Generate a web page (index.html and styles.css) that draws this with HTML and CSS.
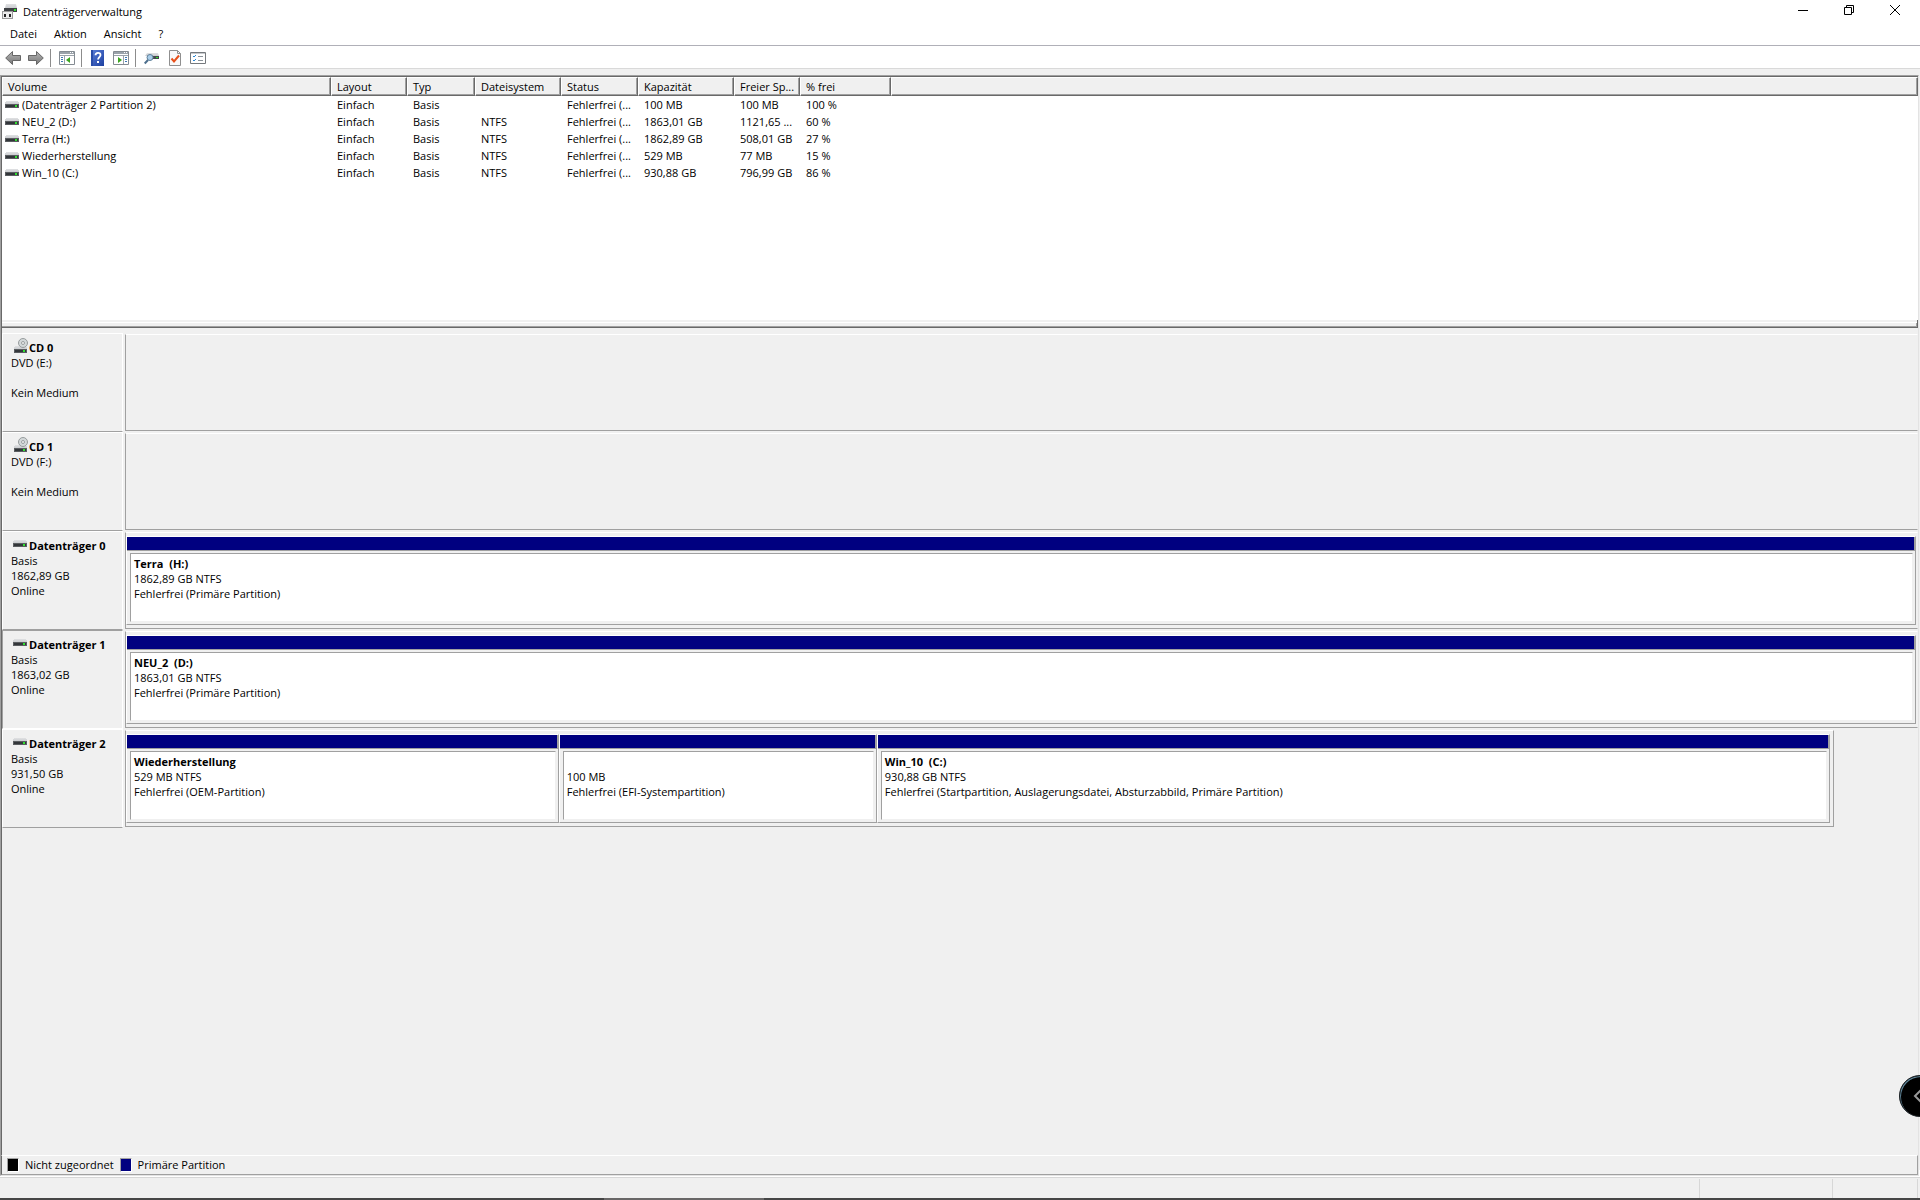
FILE: index.html
```html
<!DOCTYPE html>
<html lang="de">
<head>
  <meta charset="UTF-8">
  <meta name="viewport" content="width=device-width, initial-scale=1.0">
  <title>Datenträgerverwaltung</title>
  <link rel="stylesheet" href="styles.css">
</head>
<body>
  <!-- shared icons -->
  <svg class="sprite" aria-hidden="true">
    <defs>
      <linearGradient id="top" x1="0" y1="0" x2="0" y2="1">
        <stop offset="0" stop-color="#e0e1e3"/>
        <stop offset="1" stop-color="#cbcdd0"/>
      </linearGradient>
      <linearGradient id="arrow" x1="0" y1="0" x2="0" y2="1">
        <stop offset="0" stop-color="#b5b5b5"/>
        <stop offset="1" stop-color="#777"/>
      </linearGradient>
      <linearGradient id="help" x1="0" y1="0" x2="1" y2="1">
        <stop offset="0" stop-color="#5b7fd8"/>
        <stop offset="1" stop-color="#1c3fa0"/>
      </linearGradient>
      <symbol id="drive" viewBox="0 0 14 8">
        <path d="M1 0h12v1h1v2H0V1h1z" fill="url(#top)"/>
        <path d="M0 3h14v4H0z" fill="#5a5d60"/>
        <path d="M1 4h12v2H1z" fill="#33363a"/>
        <path d="M10 4h2v2h-2z" fill="#2fe12f"/>
      </symbol>
      <symbol id="cd" viewBox="0 0 15 16">
        <path d="M2 8h11v1h1v2H1V9h1z" fill="url(#top)"/>
        <circle cx="10" cy="5" r="4.5" fill="#d3d8d9" stroke="#979c9d"/>
        <circle cx="10" cy="5" r="1.5" fill="#f4f4f4" stroke="#9a9fa0"/>
        <path d="M1 11h13v4H1z" fill="#5a5d60"/>
        <path d="M2 12h11v2H2z" fill="#33363a"/>
        <path d="M10 12h2v2h-2z" fill="#2fe12f"/>
      </symbol>
    </defs>
  </svg>

  <div class="window">
    <header class="titlebar">
      <svg class="app-icon" width="16" height="16" viewBox="0 0 16 16">
        <path d="M4 0h10l1 4H3z" fill="url(#top)"/>
        <path d="M2 4h13v4H2z" fill="#3e4144"/>
        <path d="M12 5h2v2h-2z" fill="#2fe12f"/>
        <path d="M0 7h11v8H0z" fill="#9a9a9a"/>
        <path d="M1 8h9v6H1z" fill="#ececec"/>
        <path d="M2 10h2v3H2zM7 10h2v3H7z" fill="#222"/>
      </svg>
      <h1>Datenträgerverwaltung</h1>
      <div class="window-buttons">
        <button type="button" aria-label="Minimieren"><svg width="10" height="10" viewBox="0 0 10 10"><path d="M0 5h10v1H0z"/></svg></button>
        <button type="button" aria-label="Verkleinern"><svg width="10" height="10" viewBox="0 0 10 10"><path d="M.5 2.5h7v7h-7zM2.5 2.5v-2h7v7h-2" fill="none" stroke="#000"/></svg></button>
        <button type="button" aria-label="Schließen"><svg width="10" height="10" viewBox="0 0 10 10"><path d="M0 0l10 10M10 0L0 10" fill="none" stroke="#000"/></svg></button>
      </div>
    </header>

    <nav class="menubar">
      <button type="button">Datei</button>
      <button type="button">Aktion</button>
      <button type="button">Ansicht</button>
      <button type="button">?</button>
    </nav>

    <div class="toolbar">
      <button type="button" aria-label="Zurück"><svg width="16" height="16" viewBox="0 0 16 16"><path d="M.7 8L7.500 1.500v4h8v5h-8v4z" fill="url(#arrow)" stroke="#666"/></svg></button>
      <button type="button" aria-label="Vorwärts"><svg width="16" height="16" viewBox="0 0 16 16"><path d="M15.300 8L8.500 1.500v4h-8v5h8v4z" fill="url(#arrow)" stroke="#666"/></svg></button>
      <span class="divider"></span>
      <button type="button" aria-label="Konsolenstruktur"><svg width="16" height="14" viewBox="0 0 16 14">
        <path d="M.5.5h15v13H.5z" fill="#fff" stroke="#848b92"/><path d="M1 1h14v2H1z" fill="#9aa2aa"/><path d="M11 1h1v1h-1zM13 1h1v1h-1z" fill="#fff"/><path d="M1 4h14v1H1zM5 5h1v8H5z" fill="#9aa2aa"/><path d="M2 6h2v1H2zM2 8h2v1H2zM2 10h2v1H2z" fill="#3d78b4"/><path d="M11 6v6L7 9z" fill="#3aa51f"/></svg></button>
      <span class="divider"></span>
      <button type="button" aria-label="Hilfe"><svg width="13" height="16" viewBox="0 0 13 16">
        <path d="M0 0h13v16H0z" fill="url(#help)"/><path d="M0 0h2v16H0z" fill="#2a4da8"/><path d="M4.500 5.300c0-3.300 5-3.300 5-.3 0 2-2.400 2.200-2.400 4.500" fill="none" stroke="#fff" stroke-width="1.800"/><path d="M6 11h2v2H6z" fill="#fff"/></svg></button>
      <button type="button" aria-label="Aktionsbereich"><svg width="16" height="14" viewBox="0 0 16 14">
        <path d="M.5.5h15v13H.5z" fill="#fff" stroke="#848b92"/><path d="M1 1h14v2H1z" fill="#9aa2aa"/><path d="M11 1h1v1h-1zM13 1h1v1h-1z" fill="#fff"/><path d="M1 4h14v1H1zM10 5h1v8h-1z" fill="#9aa2aa"/><path d="M12 6h2v1h-2zM12 8h2v1h-2zM12 10h2v1h-2z" fill="#3d78b4"/><path d="M5 6v6l4-3z" fill="#3aa51f"/></svg></button>
      <span class="divider"></span>
      <button type="button" aria-label="Aktualisieren"><svg width="15" height="14" viewBox="0 0 15 14">
        <path d="M3 2h11l1 3H1z" fill="url(#top)"/><path d="M3 5h12v3H3z" fill="#45494c"/><path d="M12 6h2v1h-2z" fill="#2fe12f"/><circle cx="6" cy="6.500" r="3" fill="#a9cdea" stroke="#5f8099"/><path d="M4 9L.7 12.500" stroke="#4d6f8d" stroke-width="2"/></svg></button>
      <button type="button" aria-label="Eigenschaften"><svg width="12" height="16" viewBox="0 0 12 16">
        <path d="M.5.5h8l3 3v12H.5z" fill="#f9f9f9" stroke="#8f8f8f"/><path d="M8.500.5v3h3" fill="none" stroke="#8f8f8f"/><path d="M2.500 8.500l2.500 3 5-6" fill="none" stroke="#e8501a" stroke-width="2"/></svg></button>
      <button type="button" aria-label="Optionen"><svg width="16" height="12" viewBox="0 0 16 12">
        <path d="M.5.5h15v11H.5z" fill="#fff" stroke="#75797d"/><path d="M1 1h14v1H1z" fill="#c6c9cc"/><path d="M3 4l1 1 2-2M3 8l1 1 2-2" fill="none" stroke="#2b87d3"/><path d="M8 4h5v1H8zM8 8h5v1H8z" fill="#8a9299"/></svg></button>
    </div>

    <main class="content">
      <section class="volumes">
        <table>
          <colgroup>
            <col class="c-volume"><col class="c-layout"><col class="c-type"><col class="c-fs"><col class="c-status"><col class="c-size"><col class="c-free"><col class="c-percent"><col>
          </colgroup>
          <thead>
            <tr><th>Volume</th><th>Layout</th><th>Typ</th><th>Dateisystem</th><th>Status</th><th>Kapazität</th><th>Freier Sp...</th><th>% frei</th><th></th></tr>
          </thead>
          <tbody>
            <tr><td><svg class="drive"><use href="#drive"/></svg>(Datenträger 2 Partition 2)</td><td>Einfach</td><td>Basis</td><td></td><td>Fehlerfrei (...</td><td>100 MB</td><td>100 MB</td><td>100 %</td><td></td></tr>
            <tr><td><svg class="drive"><use href="#drive"/></svg>NEU_2 (D:)</td><td>Einfach</td><td>Basis</td><td>NTFS</td><td>Fehlerfrei (...</td><td>1863,01 GB</td><td>1121,65 ...</td><td>60 %</td><td></td></tr>
            <tr><td><svg class="drive"><use href="#drive"/></svg>Terra (H:)</td><td>Einfach</td><td>Basis</td><td>NTFS</td><td>Fehlerfrei (...</td><td>1862,89 GB</td><td>508,01 GB</td><td>27 %</td><td></td></tr>
            <tr><td><svg class="drive"><use href="#drive"/></svg>Wiederherstellung</td><td>Einfach</td><td>Basis</td><td>NTFS</td><td>Fehlerfrei (...</td><td>529 MB</td><td>77 MB</td><td>15 %</td><td></td></tr>
            <tr><td><svg class="drive"><use href="#drive"/></svg>Win_10 (C:)</td><td>Einfach</td><td>Basis</td><td>NTFS</td><td>Fehlerfrei (...</td><td>930,88 GB</td><td>796,99 GB</td><td>86 %</td><td></td></tr>
          </tbody>
        </table>
      </section>
      <div class="splitter"></div>

      <section class="disks">
        <article class="disk">
          <div class="disk-label">
            <h2><svg class="cd"><use href="#cd"/></svg>CD 0</h2>
            <p>DVD (E:)</p>
            <p>&nbsp;</p>
            <p>Kein Medium</p>
          </div>
          <div class="disk-map"></div>
        </article>
        <article class="disk">
          <div class="disk-label">
            <h2><svg class="cd"><use href="#cd"/></svg>CD 1</h2>
            <p>DVD (F:)</p>
            <p>&nbsp;</p>
            <p>Kein Medium</p>
          </div>
          <div class="disk-map"></div>
        </article>
        <article class="disk">
          <div class="disk-label">
            <h2><svg class="drive"><use href="#drive"/></svg>Datenträger 0</h2>
            <p>Basis</p>
            <p>1862,89 GB</p>
            <p>Online</p>
          </div>
          <div class="disk-map">
            <div class="partition">
              <div class="bar"></div>
              <div class="info">
                <h3>Terra&nbsp; (H:)</h3>
                <p>1862,89 GB NTFS</p>
                <p>Fehlerfrei (Primäre Partition)</p>
              </div>
            </div>
          </div>
        </article>
        <article class="disk">
          <div class="disk-label selected">
            <h2><svg class="drive"><use href="#drive"/></svg>Datenträger 1</h2>
            <p>Basis</p>
            <p>1863,02 GB</p>
            <p>Online</p>
          </div>
          <div class="disk-map">
            <div class="partition">
              <div class="bar"></div>
              <div class="info">
                <h3>NEU_2&nbsp; (D:)</h3>
                <p>1863,01 GB NTFS</p>
                <p>Fehlerfrei (Primäre Partition)</p>
              </div>
            </div>
          </div>
        </article>
        <article class="disk">
          <div class="disk-label">
            <h2><svg class="drive"><use href="#drive"/></svg>Datenträger 2</h2>
            <p>Basis</p>
            <p>931,50 GB</p>
            <p>Online</p>
          </div>
          <div class="disk-map short">
            <div class="partition recovery">
              <div class="bar"></div>
              <div class="info">
                <h3>Wiederherstellung</h3>
                <p>529 MB NTFS</p>
                <p>Fehlerfrei (OEM-Partition)</p>
              </div>
            </div>
            <div class="partition efi">
              <div class="bar"></div>
              <div class="info">
                <h3>&nbsp;</h3>
                <p>100 MB</p>
                <p>Fehlerfrei (EFI-Systempartition)</p>
              </div>
            </div>
            <div class="partition system">
              <div class="bar"></div>
              <div class="info">
                <h3>Win_10&nbsp; (C:)</h3>
                <p>930,88 GB NTFS</p>
                <p>Fehlerfrei (Startpartition, Auslagerungsdatei, Absturzabbild, Primäre Partition)</p>
              </div>
            </div>
          </div>
        </article>
      </section>

      <footer class="legend">
        <span class="swatch unallocated"></span>Nicht zugeordnet
        <span class="swatch primary"></span>Primäre Partition
      </footer>
    </main>

    <div class="statusbar"><span></span><span></span><span></span></div>
    <div class="taskbar-edge"><span></span></div>
  </div>

  <button type="button" class="side-tab" aria-label="Einblenden"><svg width="9" height="14" viewBox="0 0 9 14"><path d="M8 1L2 7l6 6" fill="none" stroke="#999" stroke-width="2"/></svg></button>
</body>
</html>
```
FILE: styles.css
```css
* {
  box-sizing: border-box;
}

body {
  margin: 0;
  overflow: hidden;
  background: #fff;
  color: #000;
  font: 11px/15px "Open Sans", "Noto Sans", sans-serif;
}

h1, h2, h3, p {
  margin: 0;
  font-size: inherit;
}

button {
  border: 0;
  padding: 0;
  background: none;
  color: inherit;
  font: inherit;
}

.sprite {
  position: absolute;
  width: 0;
  height: 0;
}

.window {
  display: flex;
  flex-direction: column;
  height: 100vh;
}

/* title bar */
.titlebar {
  display: flex;
  align-items: center;
  height: 23px;
  padding: 0 2px;
}
.titlebar h1 {
  margin-left: 5px;
  font-weight: 400;
}
.window-buttons {
  display: flex;
  align-self: flex-start;
  margin-left: auto;
}
.window-buttons button {
  display: flex;
  align-items: center;
  justify-content: center;
  width: 46px;
  height: 20px;
}

/* menu */
.menubar {
  display: flex;
  align-items: center;
  gap: 17px;
  height: 23px;
  padding: 0 10px 2px;
  border-bottom: 1px solid #b0b0b8;
}

/* toolbar */
.toolbar {
  display: flex;
  align-items: center;
  height: 23px;
  padding: 2px 1px 0;
  border-bottom: 1px solid #d9d9d9;
}
.toolbar button {
  display: flex;
  justify-content: center;
  width: 23px;
}
.toolbar .divider {
  width: 1px;
  height: 18px;
  margin: 0 4px 0 3px;
  background: #8c8c8c;
}

/* main frame */
.content {
  display: flex;
  flex: 1;
  flex-direction: column;
  margin: 6px 1px 1px 0;
  border: 1px solid;
  border-color: #a0a0a0 #e3e3e3 #e3e3e3 #a0a0a0;
  background: #f0f0f0;
  box-shadow: 0 -6px #f0f0f0, 1px -6px #f0f0f0;
}

/* volume list */
.volumes {
  height: 244px;
  border-top: 1px solid #696969;
  border-left: 1px solid #696969;
  background: #fff;
}
table {
  width: 100%;
  border-collapse: separate;
  border-spacing: 0;
  table-layout: fixed;
}
th, td {
  height: 17px;
  padding: 0 0 0 6px;
  overflow: hidden;
  text-align: left;
  white-space: nowrap;
}
th {
  height: 19px;
  padding-left: 5px;
  border: 1px solid;
  border-color: #fff #696969 #696969 #fff;
  background: #f0f0f0;
  box-shadow: inset -1px -1px #a0a0a0;
  font-weight: 400;
}
td:first-child {
  padding-left: 3px;
}
.c-volume { width: 329px; }
.c-layout { width: 76px; }
.c-type { width: 68px; }
.c-fs { width: 86px; }
.c-status { width: 77px; }
.c-size { width: 96px; }
.c-free { width: 66px; }
.c-percent { width: 91px; }

.drive {
  width: 14px;
  height: 8px;
  margin-right: 3px;
}
.cd {
  width: 15px;
  height: 16px;
  margin-right: 1px;
}

.splitter {
  height: 8px;
  border-left: 1px solid #696969;
  border-right: 1px solid #696969;
  border-bottom: 1px solid #696969;
  box-shadow: inset 0 2px #f0f0f0, inset 0 3px #fff, inset -1px -1px #a0a0a0;
}

/* graphical view */
.disks {
  flex: 1;
  padding-top: 5px;
  border-left: 1px solid #696969;
}
.disk {
  display: flex;
  height: 99px;
}
.disk-label {
  width: 121px;
  padding: 6px 0 0 8px;
  border: 1px solid;
  border-color: #fff #fff #a0a0a0;
}
.disk-label.selected {
  border-color: #a0a0a0 #fff #fff #a0a0a0;
}
.disk-label h2 {
  display: flex;
  align-items: center;
  height: 15px;
  padding-left: 2px;
}
.disk-label .drive,
.disk-label .cd {
  margin-bottom: 4px;
}
.disk-label .drive {
  margin-right: 2px;
}
.disk-map {
  display: flex;
  flex: 1;
  margin: 1px 0 1px 2px;
  padding: 3px 1px 3px 0;
  border: 1px solid #a0a0a0;
  border-top-color: #fff;
  border-right-color: #f0f0f0;
}
.disk-map.short {
  flex: 0 1 1709px;
  padding-right: 3px;
  border-right-color: #a0a0a0;
}
.partition {
  display: flex;
  flex: 1;
  flex-direction: column;
  border: 1px solid;
  border-color: #fff #a0a0a0 #a0a0a0 #fff;
}
.recovery { flex: 432; }
.efi { flex: 317; }
.system { flex: 954; }
.bar {
  height: 14px;
  border-right: 1px solid #a0a0a0;
  border-bottom: 1px solid #a0a0a0;
  background: #000080;
}
.info {
  flex: 1;
  margin: 2px 2px 2px 3px;
  padding: 2px 3px;
  border: 1px solid;
  border-color: #a0a0a0 #f0f0f0 #f0f0f0 #a0a0a0;
  background: #fff;
  white-space: nowrap;
}

/* legend */
.legend {
  display: flex;
  align-items: center;
  gap: 6px;
  height: 20px;
  padding: 0 0 1px 5px;
  border: 1px solid;
  border-color: #fff #a0a0a0 #a0a0a0 #696969;
}
.swatch {
  width: 12px;
  height: 14px;
  border: 1px solid;
  border-color: #a0a0a0 #fff #fff #a0a0a0;
}
.unallocated { background: #000; }
.primary { background: #000080; }

/* status bar */
.statusbar {
  display: flex;
  justify-content: flex-end;
  height: 21px;
  padding: 1px 2px 0 0;
  border-top: 1px solid #d7d7d7;
  background: #f0f0f0;
}
.statusbar span {
  border-right: 1px solid #d7d7d7;
}
.statusbar span:nth-child(2) { width: 133px; }
.statusbar span:nth-child(3) { width: 85px; }

.taskbar-edge {
  height: 2px;
  padding-left: 604px;
  background: #464646;
}
.taskbar-edge span {
  display: block;
  width: 160px;
  height: 2px;
  background: #696767;
}

/* flyout handle on the screen edge */
.side-tab {
  position: absolute;
  top: 1075px;
  right: -21px;
  display: flex;
  align-items: center;
  width: 42px;
  height: 42px;
  padding-left: 13px;
  border: 1px solid #1c2226;
  border-radius: 50%;
  background: #000;
  box-shadow: inset 1px 1px #5d8296;
}
```
